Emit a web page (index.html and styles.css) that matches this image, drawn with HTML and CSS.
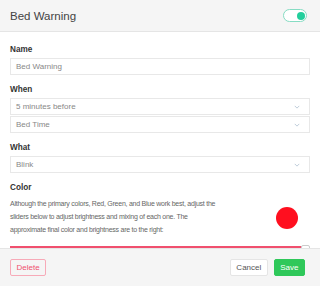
FILE: index.html
```html
<!DOCTYPE html>
<html>
<head>
<meta charset="utf-8">
<link rel="stylesheet" href="styles.css">
</head>
<body>
<div class="modal">
  <header class="header">
    <h1 class="title">Bed Warning</h1>
    <span class="toggle"><span class="knob"></span></span>
  </header>
  <main class="content">
    <div class="label first">Name</div>
    <div class="field">Bed Warning</div>
    <div class="label">When</div>
    <div class="field select">5 minutes before<svg class="chev" viewBox="0 0 8 5"><path d="M1 1l3 3 3-3" fill="none" stroke="#a9bccd" stroke-width="1"/></svg></div>
    <div class="field select second">Bed Time<svg class="chev" viewBox="0 0 8 5"><path d="M1 1l3 3 3-3" fill="none" stroke="#a9bccd" stroke-width="1"/></svg></div>
    <div class="label">What</div>
    <div class="field select">Blink<svg class="chev" viewBox="0 0 8 5"><path d="M1 1l3 3 3-3" fill="none" stroke="#a9bccd" stroke-width="1"/></svg></div>
    <div class="label">Color</div>
    <div class="color-row">
      <p class="desc">Although the primary colors, Red, Green, and Blue work best, adjust the<br>sliders below to adjust brightness and mixing of each one. The<br>approximate final color and brightness are to the right:</p>
      <span class="swatch"></span>
    </div>
    <div class="slider"><span class="track"></span><span class="thumb"></span></div>
  </main>
  <footer class="footer">
    <button class="btn delete">Delete</button>
    <span class="spacer"></span>
    <button class="btn cancel">Cancel</button>
    <button class="btn save">Save</button>
  </footer>
</div>
</body>
</html>
```
FILE: styles.css
```css
* { box-sizing: border-box; }
html, body { margin: 0; padding: 0; }
body {
  width: 320px;
  height: 286px;
  overflow: hidden;
  font-family: "Liberation Sans", Arial, sans-serif;
  color: #333;
  background: #fff;
}
.modal { height: 286px; display: flex; flex-direction: column; }
.header {
  height: 32px;
  background: #f5f5f5;
  border-bottom: 1px solid #e5e5e5;
  display: flex;
  align-items: center;
  padding: 0 13px 0 10px;
  flex: none;
}
.title { margin: 0; font-size: 11.5px; font-weight: 400; color: #444; flex: 1; }
.toggle {
  width: 24px; height: 13px;
  border: 1.5px solid #86dcc3;
  border-radius: 7px;
  background: #fff;
  display: flex; align-items: center; justify-content: flex-end;
  padding-right: 1.5px;
}
.knob { width: 8px; height: 8px; border-radius: 50%; background: #22cf9c; }
.content { flex: 1; padding: 0 10px; overflow: hidden; }
.label { font-size: 8.2px; font-weight: 700; line-height: 12px; margin-top: 9px; margin-bottom: 2px; color: #333; }
.label.first { margin-top: 12px; }
.field {
  height: 17px;
  border: 1px solid #e8e8e8;
  font-size: 8px;
  color: #888;
  display: flex; align-items: center;
  padding: 0 5px;
  background: #fff;
}
.select { justify-content: space-between; }
.second { margin-top: 1px; }
.chev { width: 6px; height: 4px; margin-right: 4px; }
.color-row { display: flex; align-items: center; margin-top: 3px; }
.desc { margin: 0; flex: 1; white-space: nowrap; font-size: 7px; letter-spacing: -0.25px; line-height: 13px; color: #666; }
.swatch { flex: none; width: 22px; height: 22px; border-radius: 50%; background: #ff0f1f; margin-right: 12px; margin-top: 3px; }
.slider { position: relative; height: 5px; margin-top: 9px; }
.track { position: absolute; left: 0; right: 8px; top: 1px; height: 3px; background: #f0506e; }
.thumb { position: absolute; right: 0; top: 0; width: 9px; height: 12px; background: #fff; border: 1px solid #ccc; border-radius: 2px; }
.footer {
  height: 38px;
  flex: none;
  background: #f5f5f5;
  border-top: 1px solid #e5e5e5;
  display: flex; align-items: center;
  padding: 0 15px 0 10px;
  gap: 6px;
}
.spacer { flex: 1; }
.btn {
  height: 17px;
  font-family: inherit;
  font-size: 8px;
  padding: 0 5.5px;
  border-radius: 2px;
}
.delete { background: transparent; border: 1px solid #f7aab8; color: #f0506e; }
.cancel { background: #fff; border: 1px solid #e5e5e5; color: #555; }
.save { background: #2fc85a; border: 1px solid #2fc85a; color: #fff; }
```
